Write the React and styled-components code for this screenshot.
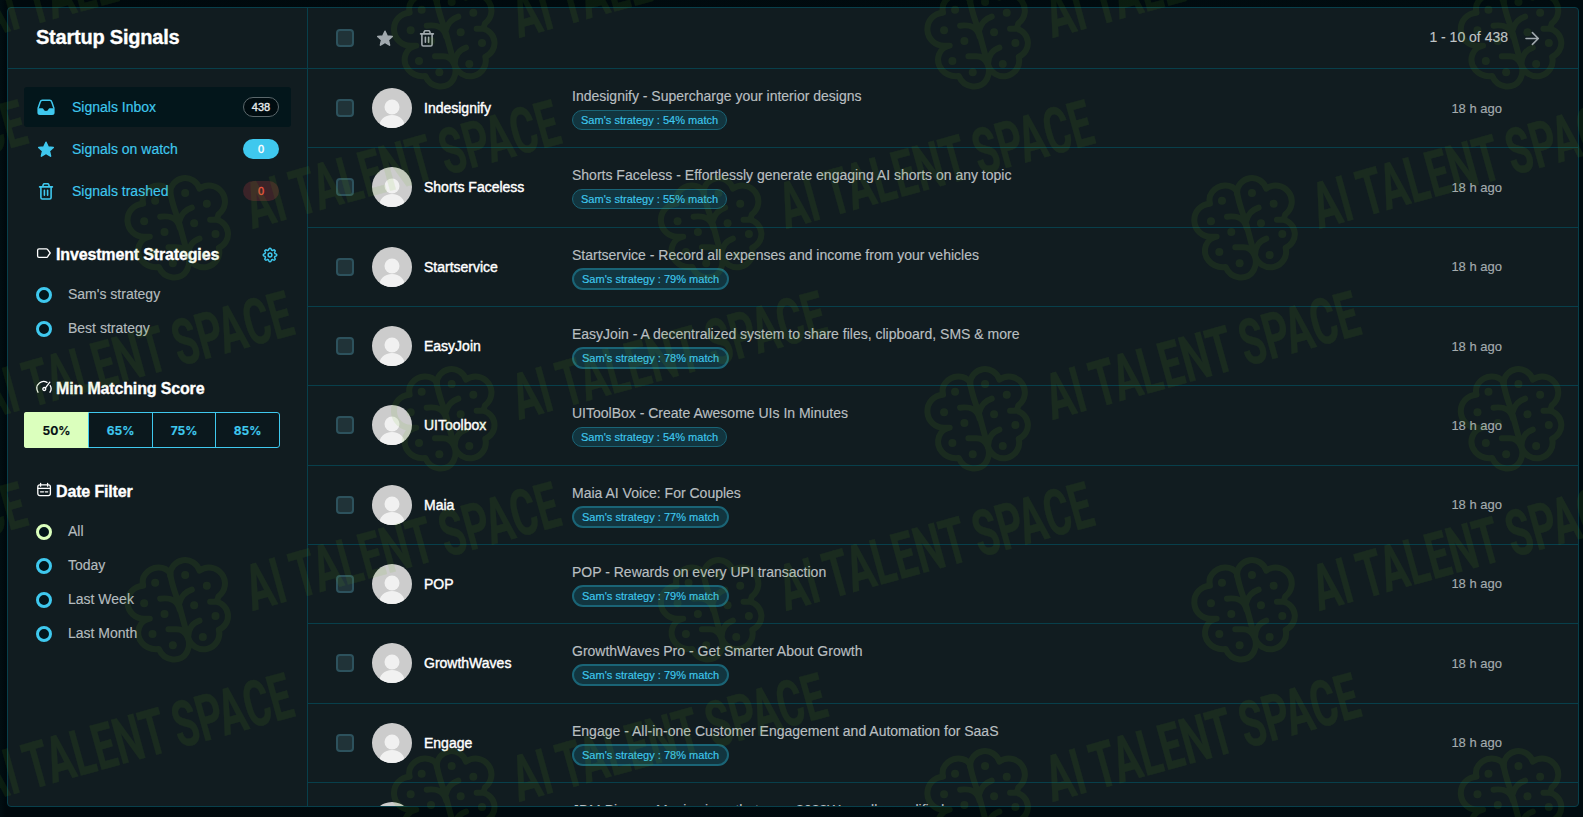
import React from 'react';
import styled, { createGlobalStyle } from 'styled-components';

const GlobalStyle = createGlobalStyle`
    * { box-sizing: border-box; }

    body {
        margin: 0;
        height: 817px;
        overflow: hidden;
        background: #010c10;
        font-family: 'Liberation Sans', Arial, sans-serif;
        -webkit-text-stroke: 0.15px;
    }
`;

const Page = styled.div`
    position: relative;
    width: 1583px;
    height: 817px;
    padding: 7px 4px 10px 7px;
    overflow: hidden;
    background: linear-gradient(90deg, #010e12, #00090d 6px, #010c10);
`;

const Panel = styled.main`
    display: flex;
    width: 1572px;
    height: 800px;
    border: 1px solid #083f4b;
    border-radius: 4px;
    background: #111c20;
    overflow: hidden;
`;

const Sidebar = styled.aside`
    width: 300px;
    flex: none;
    border-right: 1px solid #083f4b;
`;

const SidebarHeader = styled.header`
    height: 61px;
    padding: 17px 28px 0;
    border-bottom: 1px solid #083f4b;
`;

const Title = styled.h1`
    margin: 0;
    font-size: 20px;
    line-height: 24px;
    letter-spacing: -0.22px;
    color: #fff;
    -webkit-text-stroke: 0.35px;
`;

const Menu = styled.nav`
    display: flex;
    flex-direction: column;
    gap: 2px;
    padding: 18px 16px 0;
`;

const MenuItem = styled.a`
    display: flex;
    align-items: center;
    height: 40px;
    padding: 0 12px;
    border-radius: 3px;
    font-size: 14px;
    color: #3fc8ee;
    background: ${({ $active }) => ($active ? '#03161b' : 'transparent')};

    svg { width: 20px; height: 20px; margin-right: 16px; }
`;

const badges = {
    inbox: 'border: 1px solid #5b686c; background: #000c10; color: #e8ecee;',
    watch: 'background: #3fc8ee; color: #fff;',
    trash: 'background: #3b2328; color: #e9553f;',
};

const Badge = styled.span`
    margin-left: auto;
    width: 36px;
    height: 20px;
    display: flex;
    align-items: center;
    justify-content: center;
    border-radius: 10px;
    font-size: 11px;
    -webkit-text-stroke: 0.35px;
    ${({ $kind }) => badges[$kind]}
`;

const Section = styled.section`
    padding: 0 28px;
    margin-top: ${({ $top }) => $top}px;
`;

const SectionTitle = styled.h2`
    display: flex;
    align-items: center;
    height: 24px;
    margin: 0;
    font-size: 16px;
    letter-spacing: -0.15px;
    color: #fff;
    -webkit-text-stroke: 0.35px;

    > svg:first-child { margin: -5px 4px 0 0; }
    > svg:last-child:not(:first-child) { margin: 0 1px 0 auto; color: #3fc8ee; }
`;

const Options = styled.div`
    padding-top: ${({ $top }) => $top}px;
`;

const Option = styled.label`
    display: flex;
    align-items: center;
    height: 34px;
    font-size: 14px;
    color: #b4bbbe;
`;

const Ring = styled.span`
    width: 16px;
    height: 16px;
    margin: 1px 16px 0 0;
    border: 3px solid ${({ $on }) => ($on ? '#dbffbd' : '#3fc8ee')};
    border-radius: 50%;
    background: #03151b;
`;

const Scores = styled.div`
    display: grid;
    grid-template-columns: 65px 64px 63px 64px;
    width: 256px;
    height: 36px;
    margin: 11px 0 0 -12px;
    border-radius: 3px;
    overflow: hidden;
`;

const Score = styled.button`
    padding: 0;
    border: 1px solid ${({ $on }) => ($on ? '#dbffbd' : '#3fc8ee')};
    border-left-width: ${({ $on }) => ($on ? 1 : 0)}px;
    border-right-color: #3fc8ee;
    background: ${({ $on }) => ($on ? '#dbffbd' : '#0b181d')};
    color: ${({ $on }) => ($on ? '#061014' : '#3fc8ee')};
    font: bold 12px Inter, sans-serif;

    &:last-child { border-radius: 0 3px 3px 0; }
`;

const Content = styled.section`
    flex: 1;
    min-width: 0;
`;

const Toolbar = styled.header`
    display: flex;
    align-items: center;
    height: 61px;
    padding: 0 38px 1px 28px;
    border-bottom: 1px solid #083f4b;
    color: #a1a9ae;
`;

const Checkbox = styled.span`
    width: 18px;
    height: 18px;
    flex: none;
    border: 2px solid #2d525d;
    border-radius: 4px;
    background: #203338;
`;

const ToolIcon = styled.span`
    display: flex;
    margin-left: ${({ $gap }) => $gap}px;
`;

const Pager = styled.div`
    display: flex;
    align-items: center;
    gap: 16px;
    margin-left: auto;
    font-size: 14px;
    color: #c0c5c7;
`;

const PageRange = styled.span`
    margin-top: -1px;
`;

const Row = styled.article`
    display: flex;
    align-items: center;
    height: 79.33px;
    padding: 0 76px 0.3px 28px;
    border-bottom: 1px solid #083f4b;
`;

const Avatar = styled.span`
    display: block;
    width: 40px;
    height: 40px;
    margin: 0 12px 0 18px;
    border-radius: 50%;
    overflow: hidden;
`;

const Name = styled.span`
    width: 148px;
    font-size: 14px;
    color: #fff;
    -webkit-text-stroke: 0.4px;
`;

const Summary = styled.div`
    display: flex;
    flex-direction: column;
    align-items: flex-start;
    height: 44px;
    flex: 1;
    font-size: 14px;
    line-height: 20px;
    color: #b9bfc1;
`;

const Match = styled.span`
    display: flex;
    align-items: center;
    height: ${({ $strong }) => ($strong ? 22 : 20)}px;
    padding: 0 8px;
    margin-top: ${({ $strong }) => ($strong ? 3 : 4)}px;
    border: ${({ $strong }) => ($strong ? 2 : 1)}px solid #1a6476;
    border-radius: 11px;
    background: #12353f;
    font-size: 11px;
    letter-spacing: 0.02px;
    color: #3fc8ee;
`;

const Time = styled.time`
    font-size: 13px;
    color: #a3abae;
`;

const Watermark = styled.svg`
    position: absolute;
    inset: 0;
    opacity: 0.1;
    pointer-events: none;
`;

const InboxIcon = () => (
    <svg viewBox="0 0 20 20" fill="currentColor">
        <path d="M2 11.5 4.2 5a2.4 2.4 0 0 1 2.2-1.7h7.2A2.4 2.4 0 0 1 15.8 5L18 11.5" fill="none" stroke="currentColor" strokeWidth="1.5" />
        <path d="M1.4 11.2h4.9c.6 0 .9.4 1.1.9a2.7 2.7 0 0 0 5.2 0c.2-.5.5-.9 1.1-.9h4.9v4.3a2.5 2.5 0 0 1-2.5 2.5H3.9a2.5 2.5 0 0 1-2.5-2.5Z" />
    </svg>
);

const StarIcon = () => (
    <svg width="20" height="20" viewBox="0 0 20 20" fill="currentColor" stroke="currentColor" strokeWidth="1.5" strokeLinejoin="round">
        <path d="m10 3.2 2.1 4.7 5.2.6-3.9 3.4 1.2 5.3-4.6-2.8-4.6 2.8 1.2-5.3-3.9-3.4 5.2-.6Z" />
    </svg>
);

const TrashIcon = () => (
    <svg width="20" height="20" viewBox="0 0 20 20" fill="none" stroke="currentColor" strokeWidth="1.6" strokeLinecap="round" strokeLinejoin="round">
        <path d="M3.6 5.9h12.8M4.9 6v10.6c0 .8.6 1.4 1.4 1.4h7.4c.8 0 1.4-.6 1.4-1.4V6M6.7 5.6l.5-1.9c.2-.6.6-.9 1.2-.9h3.2c.6 0 1 .3 1.2.9l.5 1.9M8.4 9.3v5M11.6 9.3v5" />
    </svg>
);

const LabelIcon = () => (
    <svg width="16" height="16" viewBox="0 0 16 16" fill="none" stroke="currentColor" strokeWidth="1.3" strokeLinejoin="round">
        <path d="M3 3.8h7.3c.5 0 .9.2 1.2.6L14.2 8l-2.7 3.8c-.3.4-.7.6-1.2.6H3c-.8 0-1.4-.6-1.4-1.4V5.2c0-.8.6-1.4 1.4-1.4Z" />
    </svg>
);

const GaugeIcon = () => (
    <svg width="16" height="16" viewBox="0 0 16 16" fill="none" stroke="currentColor" strokeWidth="1.3" strokeLinecap="round">
        <path d="M2 13.2C.2 9.8.7 6.1 3.4 4 5.6 2.2 8.7 2 11 3.4M14.2 6.5c1.2 2 1.1 4.7-.2 6.7M13.8 3.2 9.5 8.9" />
        <circle cx="8.3" cy="10" r="1.5" />
    </svg>
);

const CalendarIcon = () => (
    <svg width="16" height="16" viewBox="0 0 16 16" fill="none" stroke="currentColor" strokeWidth="1.3" strokeLinecap="round">
        <rect x="1.8" y="2.8" width="12.6" height="10.8" rx="2" />
        <path d="M4.6 1.5v2.7M11.6 1.5v2.7M2 6.4h12.2M4.5 9.8h3M9.3 9.8h2.4" />
    </svg>
);

const gearPath = Array.from({ length: 65 }, (_, i) => {
    const angle = (i / 64) * Math.PI * 2;
    const radius = 5.9 + Math.tanh(Math.cos(angle * 8) * 2) * 0.85;
    return `${i ? 'L' : 'M'}${(8 + Math.cos(angle) * radius).toFixed(2)} ${(8 + Math.sin(angle) * radius).toFixed(2)}`;
}).join('') + 'Z';

const GearIcon = () => (
    <svg width="16" height="16" viewBox="0 0 16 16" fill="none" stroke="currentColor" strokeWidth="1.5" strokeLinejoin="round">
        <path d={gearPath} />
        <circle cx="8" cy="8" r="1.9" />
    </svg>
);

const ArrowIcon = () => (
    <svg width="16" height="16" viewBox="0 0 16 16" fill="none" stroke="#a1a9ae" strokeWidth="1.6" strokeLinecap="round" strokeLinejoin="round">
        <path d="M2 8.5h12.2M8.4 2.6l5.9 5.9-5.9 5.9" />
    </svg>
);

const Person = () => (
    <Avatar>
        <svg width="40" height="40" viewBox="0 0 40 40">
            <rect width="40" height="40" fill="#ccc" />
            <circle cx="20" cy="19" r="7.5" fill="#f1f1f1" />
            <path d="M7 40c0-8 5.5-13 13-13s13 5 13 13Z" fill="#f1f1f1" />
        </svg>
    </Avatar>
);

const dots = [[110, 98], [200, 75], [265, 107], [77, 160], [227, 166], [138, 192], [102, 252], [291, 198], [253, 261], [163, 286]];

const Mark = ({ x, y }) => (
    <g transform={`translate(${x} ${y})`} fill="#68b01c" stroke="#68b01c">
        <g transform="translate(-61 -60) scale(0.3333)">
            <g fill="none" strokeWidth="18" strokeLinecap="round" strokeLinejoin="round">
                <path d="M155 76A45 45 0 0 1 243 62A44 44 0 0 1 300 139Q298 150 293 155M275 155H293A44 44 0 0 1 301 239A45 45 0 1 1 209 262C209 236 224 218 243 212" />
                <path d="M155 70C139 46 100 46 80 73Q69 87 74 107A47 47 0 0 0 79 206H94Q70 211 62 232C50 266 78 302 121 297C136 334 188 341 206 305C221 274 204 238 174 238H150" />
                <path d="M155 70C159 105 174 137 183 169L207 258M125 146C157 142 177 151 184 180M220 119C199 126 188 140 183 158" />
            </g>
            {dots.map(([cx, cy]) => <circle key={`${cx}-${cy}`} cx={cx} cy={cy} r="12" stroke="none" />)}
        </g>
        <text
            transform="translate(73 1) rotate(-15.5)"
            textLength="323"
            lengthAdjust="spacingAndGlyphs"
            strokeWidth="0.4"
            fontFamily="Roboto"
            fontWeight="700"
            fontSize="64"
        >
            AI TALENT SPACE
        </text>
    </g>
);

const marks = [-1, 0, 1, 2].flatMap(col => [-1, 0, 1, 2].flatMap(row => [
    [179.5 + col * 533.4, 228 + row * 382],
    [446 + col * 533.4, 37 + row * 382],
])).filter(([x, y]) => x < 1640 && y > -60 && y < 960);

const signals = [
    ['Indesignify', 'Indesignify - Supercharge your interior designs', 54],
    ['Shorts Faceless', 'Shorts Faceless - Effortlessly generate engaging AI shorts on any topic', 55],
    ['Startservice', 'Startservice - Record all expenses and income from your vehicles', 79],
    ['EasyJoin', 'EasyJoin - A decentralized system to share files, clipboard, SMS & more', 78],
    ['UIToolbox', 'UIToolBox - Create Awesome UIs In Minutes', 54],
    ['Maia', 'Maia AI Voice: For Couples', 77],
    ['POP', 'POP - Rewards on every UPI transaction', 79],
    ['GrowthWaves', 'GrowthWaves Pro - Get Smarter About Growth', 79],
    ['Engage', 'Engage - All-in-one Customer Engagement and Automation for SaaS', 78],
    ['JDM Piano', 'JDM Piano – Magic piano that uses 8088Wav rolls amplified', 78],
];

const App = () => (
    <Page>
        <GlobalStyle />
        <Panel>
            <Sidebar>
                <SidebarHeader><Title>Startup Signals</Title></SidebarHeader>
                <Menu>
                    <MenuItem $active><InboxIcon />Signals Inbox<Badge $kind="inbox">438</Badge></MenuItem>
                    <MenuItem><StarIcon />Signals on watch<Badge $kind="watch">0</Badge></MenuItem>
                    <MenuItem><TrashIcon />Signals trashed<Badge $kind="trash">0</Badge></MenuItem>
                </Menu>
                <Section $top={32}>
                    <SectionTitle><LabelIcon />Investment Strategies<GearIcon /></SectionTitle>
                    <Options $top={10}>
                        {["Sam's strategy", 'Best strategy'].map(name => <Option key={name}><Ring />{name}</Option>)}
                    </Options>
                </Section>
                <Section $top={32}>
                    <SectionTitle><GaugeIcon />Min Matching Score</SectionTitle>
                    <Scores>
                        {[50, 65, 75, 85].map(score => <Score key={score} $on={score === 50}>{score}%</Score>)}
                    </Scores>
                </Section>
                <Section $top={32}>
                    <SectionTitle><CalendarIcon />Date Filter</SectionTitle>
                    <Options $top={10}>
                        {['All', 'Today', 'Last Week', 'Last Month'].map(name => (
                            <Option key={name}><Ring $on={name === 'All'} />{name}</Option>
                        ))}
                    </Options>
                </Section>
            </Sidebar>
            <Content>
                <Toolbar>
                    <Checkbox />
                    <ToolIcon $gap={21}><StarIcon /></ToolIcon>
                    <ToolIcon $gap={22}><TrashIcon /></ToolIcon>
                    <Pager><PageRange>1 - 10 of 438</PageRange><ArrowIcon /></Pager>
                </Toolbar>
                {signals.map(([name, summary, match]) => (
                    <Row key={name}>
                        <Checkbox />
                        <Person />
                        <Name>{name}</Name>
                        <Summary>
                            {summary}
                            <Match $strong={match > 70}>Sam's strategy : {match}% match</Match>
                        </Summary>
                        <Time>18 h ago</Time>
                    </Row>
                ))}
            </Content>
        </Panel>
        <Watermark width="1583" height="817" aria-hidden="true">
            {marks.map(([x, y]) => <Mark key={`${x}-${y}`} x={x} y={y} />)}
        </Watermark>
    </Page>
);

export default App;
